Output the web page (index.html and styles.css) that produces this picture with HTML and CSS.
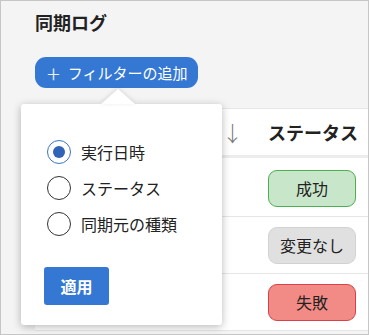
FILE: index.html
```html
<!DOCTYPE html>
<html lang="ja">
<head>
    <meta charset="UTF-8">
    <meta name="viewport" content="width=device-width, initial-scale=1.0">
    <title>同期ログ</title>
    <link rel="stylesheet" href="styles.css">
</head>
<body>
    <div class="page">
        <h1>同期ログ</h1>
        <button class="filter-btn"><span class="plus">+</span>フィルターの追加</button>

        <div class="log-table">
            <div class="row head">
                <div class="cell sort">↓</div>
                <div class="cell status">ステータス</div>
            </div>
            <div class="row first">
                <div class="cell sort"></div>
                <div class="cell status"><span class="badge ok">成功</span></div>
            </div>
            <div class="row">
                <div class="cell sort"></div>
                <div class="cell status"><span class="badge none">変更なし</span></div>
            </div>
            <div class="row">
                <div class="cell sort"></div>
                <div class="cell status"><span class="badge fail">失敗</span></div>
            </div>
        </div>
    </div>

    <div class="popover">
        <label class="radio"><span class="dot checked"></span>実行日時</label>
        <label class="radio"><span class="dot"></span>ステータス</label>
        <label class="radio"><span class="dot"></span>同期元の種類</label>
        <button class="apply">適用</button>
    </div>
</body>
</html>
```

FILE: styles.css
```css
html, body {
    margin: 0;
    height: 100%;
}

body {
    font-family: "Noto Sans CJK JP", "Noto Sans", sans-serif;
    background-color: #f4f4f4;
    color: #222;
    border: 1px solid #c6c6c6;
    box-sizing: border-box;
    overflow: hidden;
    position: relative;
}

.page {
    padding: 9px 0 0 34px;
}

h1 {
    font-size: 18px;
    font-weight: bold;
    margin: 0;
    line-height: 24px;
}

.filter-btn {
    margin-top: 23px;
    height: 31px;
    width: 163px;
    background-color: #3578d4;
    color: #fff;
    border: none;
    border-radius: 11px;
    font-family: inherit;
    font-size: 15px;
    display: flex;
    align-items: center;
    padding: 0 0 0 12px;
}

.plus {
    font-size: 24px;
    font-weight: 300;
    margin-right: 8px;
    line-height: 1;
    color: #e8eefa;
}

.log-table {
    margin-top: 20px;
    background-color: #fff;
    border-top: 1px solid #e6e6e6;
}

.row {
    display: flex;
    height: 56px;
    border-bottom: 1px solid #e6e6e6;
    align-items: center;
}

.row.head {
    height: 46px;
    border-bottom: 3px solid #ececec;
}

.row.first {
    height: 59px;
    padding-top: 3px;
    box-sizing: border-box;
}

.cell.sort {
    width: 220px;
    box-sizing: border-box;
    text-align: right;
    color: #777;
    font-size: 21px;
    font-weight: 300;
    padding-right: 12px;
}

.cell.status {
    width: 88px;
    margin-left: 13px;
    font-size: 18px;
    font-weight: bold;
    text-align: center;
    white-space: nowrap;
}

.badge {
    display: block;
    height: 37px;
    line-height: 35px;
    box-sizing: border-box;
    border: 1px solid;
    border-radius: 9px;
    font-size: 16px;
    font-weight: normal;
    color: #222;
}

.badge.ok {
    background-color: #c8e6c9;
    border-color: #4caf50;
}

.badge.none {
    background-color: #e0e0e0;
    border-color: #d2d2d2;
}

.badge.fail {
    background-color: #f28b86;
    border-color: #d9414a;
}

.popover {
    position: absolute;
    left: 20px;
    top: 103px;
    width: 201px;
    height: 221px;
    background-color: #fff;
    border-radius: 3px;
    box-shadow: 0 2px 8px rgba(0, 0, 0, 0.28);
    box-sizing: border-box;
    padding: 36px 0 0 26px;
}

.popover::before {
    content: "";
    position: absolute;
    top: -15px;
    left: 80px;
    border-left: 17px solid transparent;
    border-right: 17px solid transparent;
    border-bottom: 15px solid #fff;
    filter: drop-shadow(0 -1px 2px rgba(0, 0, 0, 0.12));
}

.radio {
    display: flex;
    align-items: center;
    height: 24px;
    margin-bottom: 12px;
    font-size: 16px;
}

.dot {
    width: 24px;
    height: 24px;
    box-sizing: border-box;
    border: 1.5px solid #333;
    border-radius: 50%;
    margin-right: 10px;
    display: flex;
    align-items: center;
    justify-content: center;
}

.dot.checked {
    border: 1px solid #3b74c6;
}

.dot.checked::after {
    content: "";
    width: 12px;
    height: 12px;
    border-radius: 50%;
    background-color: #2f64b6;
}

.apply {
    margin: 19px 0 0 -3px;
    width: 65px;
    height: 38px;
    background-color: #3578d4;
    color: #fff;
    border: none;
    border-radius: 3px;
    font-family: inherit;
    font-size: 16px;
    font-weight: bold;
}
```
